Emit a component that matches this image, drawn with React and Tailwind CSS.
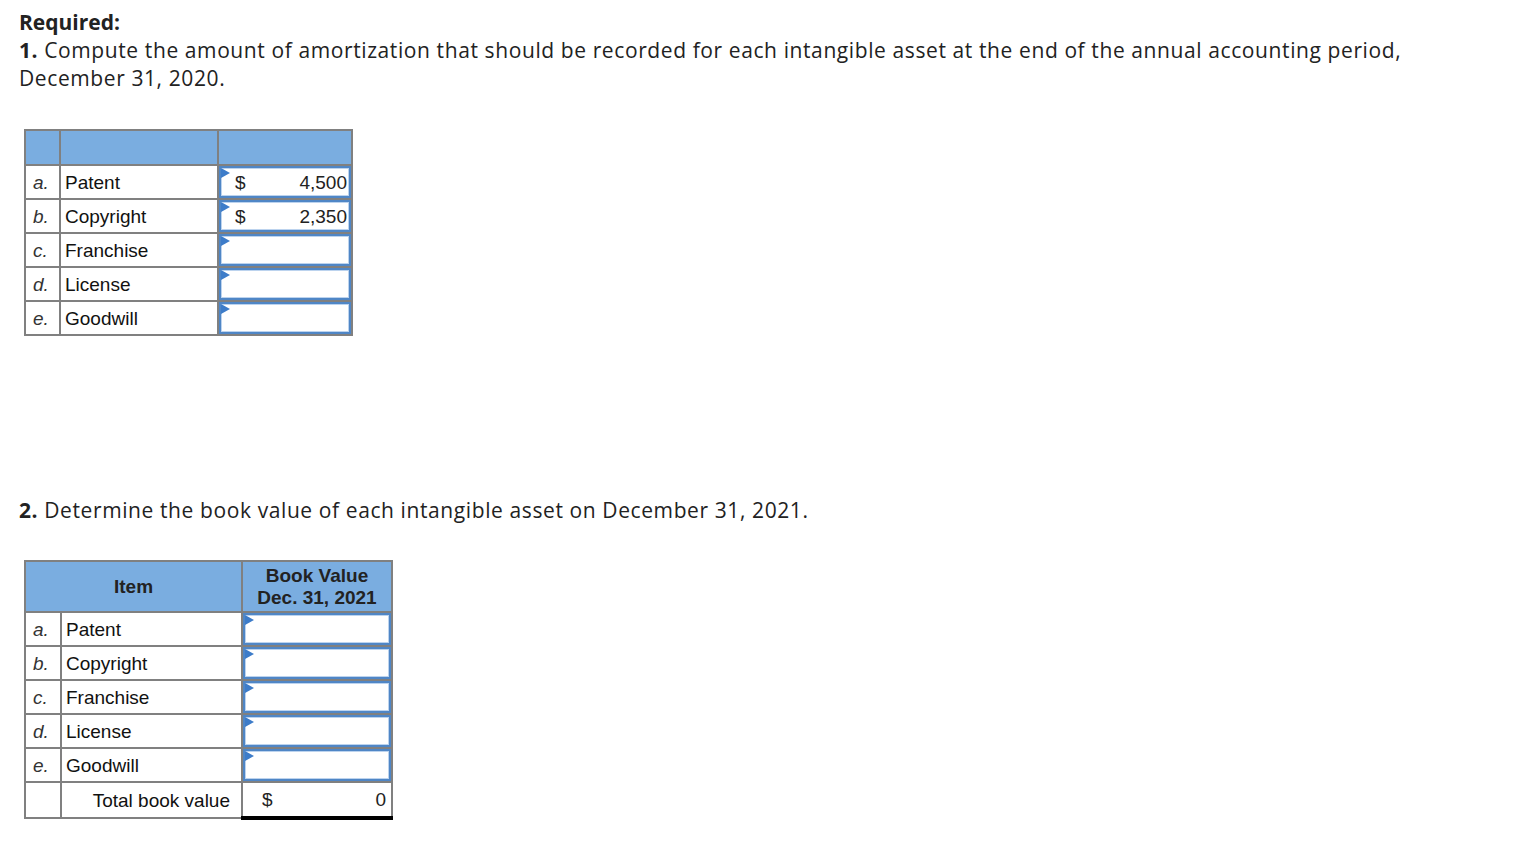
const labelCell = 'border-2 border-[#808080] px-[7px] text-[#333] italic';
const nameCell = 'border-2 border-[#808080] px-[4px] text-[#111]';

function Flag() {
  return (
    <svg className="absolute left-0 top-0" width="9" height="12" viewBox="0 0 9 12">
      <path d="M0 0 L9 5 L0 10 Z" fill="#3d7cc9" />
    </svg>
  );
}

function InputBox({ dollar, value }) {
  return (
    <div className="relative h-full border-2 border-[#4f86c6] outline outline-1 -outline-offset-3 outline-[#bcd3ee] bg-white flex items-center px-[14px]">
      <Flag />
      {dollar && <span>$</span>}
      <span className="ml-auto -mr-[12px]">{value}</span>
    </div>
  );
}

const part1 = [
  ['a.', 'Patent', '4,500'],
  ['b.', 'Copyright', '2,350'],
  ['c.', 'Franchise', ''],
  ['d.', 'License', ''],
  ['e.', 'Goodwill', ''],
];

export default function App() {
  return (
    <div className="bg-white min-h-screen w-[1514px] h-[868px] pl-[19px] pt-[8px] text-[#222] font-['Open_Sans','Liberation_Sans',sans-serif]">
      <div className="text-[21px] leading-[28px] tracking-[0.6px]">
        <p className="font-bold tracking-normal">Required:</p>
        <p>
          <span className="font-bold">1.</span> Compute the amount of amortization that should be recorded for each intangible asset at the end of the annual accounting period,
          <br />
          December 31, 2020.
        </p>
      </div>

      <table className="mt-[37px] ml-[5px] border-collapse border-2 border-[#808080] font-['Liberation_Sans',Arial,sans-serif] text-[19px] leading-none">
        <tbody>
          <tr className="h-[35px] bg-[#7aade0]">
            <td className="border-2 border-[#808080] w-[35px]"></td>
            <td className="border-2 border-[#808080] w-[158px]"></td>
            <td className="border-2 border-[#808080] w-[134px]"></td>
          </tr>
          {part1.map(([l, n, v]) => (
            <tr key={l} className="h-[34px]">
              <td className={labelCell}>{l}</td>
              <td className={nameCell}>{n}</td>
              <td className="border-2 border-[#808080] p-0 h-[34px]">
                <InputBox dollar={!!v} value={v} />
              </td>
            </tr>
          ))}
        </tbody>
      </table>

      <p className="mt-[160px] text-[21px] leading-[28px] tracking-[0.6px]">
        <span className="font-bold">2.</span> Determine the book value of each intangible asset on December 31, 2021.
      </p>

      <table className="mt-[36px] ml-[5px] border-collapse border-2 border-[#808080] font-['Liberation_Sans',Arial,sans-serif] text-[19px] leading-none">
        <tbody>
          <tr className="h-[51px] bg-[#7aade0] font-bold text-[#222]">
            <td colSpan={2} className="border-2 border-[#808080] text-center">Item</td>
            <td className="border-2 border-[#808080] text-center leading-[22px] w-[150px]">
              Book Value
              <br />
              Dec. 31, 2021
            </td>
          </tr>
          {part1.map(([l, n]) => (
            <tr key={l} className="h-[34px]">
              <td className={labelCell + ' w-[36px]'}>{l}</td>
              <td className={nameCell + ' w-[181px]'}>{n}</td>
              <td className="border-2 border-[#808080] p-0 h-[34px]">
                <InputBox />
              </td>
            </tr>
          ))}
          <tr className="h-[36px]">
            <td className="border-2 border-[#808080]"></td>
            <td className="border-2 border-[#808080] text-right pr-[11px] text-[#111]">Total book value</td>
            <td className="border-2 border-[#808080] border-t-black border-b-[4px] border-b-black p-0">
              <div className="flex items-center pl-[19px] pr-[5px]">
                <span>$</span>
                <span className="ml-auto">0</span>
              </div>
            </td>
          </tr>
        </tbody>
      </table>
    </div>
  );
}
